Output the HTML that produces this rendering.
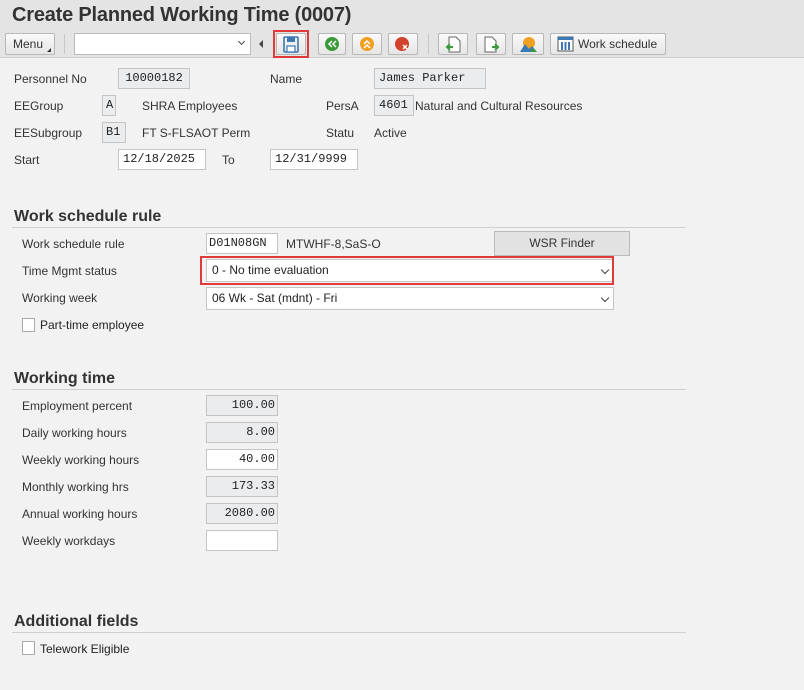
<!DOCTYPE html>
<html><head><meta charset="utf-8"><style>
*{box-sizing:border-box;margin:0;padding:0}
body{width:804px;height:690px;background:#f2f2f2;font-family:"Liberation Sans",sans-serif;font-size:12px;color:#333;position:relative;overflow:hidden}
.a{position:absolute}
.hdr{left:0;top:0;width:804px;height:58px;background:#e4e4e4;border-bottom:1px solid #d0d0d0}
.t{left:12px;top:4px;font-size:20px;font-weight:bold;color:#333;letter-spacing:-0.2px}
.btn{position:absolute;top:33px;height:22px;border:1px solid #b8b8b8;background:linear-gradient(#fafafa,#e6e6e6);border-radius:2px}
.lbl{position:absolute;font-size:12px;color:#333;line-height:14px}
.box{position:absolute;height:21px;border:1px solid #c4c4c4;background:#eaecee;font-family:"Liberation Mono",monospace;font-size:12px;line-height:19px;padding:0 4px;color:#222}
.w{background:#fff}
.r{text-align:right}
.sec{position:absolute;left:14px;font-size:16px;font-weight:bold;color:#333}
.line{position:absolute;left:12px;width:674px;height:1px;background:#cfcfcf}
.sel{position:absolute;left:206px;width:408px;height:23px;border:1px solid #c4c4c4;background:#fff;font-size:12px;line-height:21px;padding-left:5px;color:#222}
.chev{position:absolute;right:5px;top:7px;width:6px;height:6px;border-right:1.5px solid #444;border-bottom:1.5px solid #444;transform:rotate(45deg)}
.cb{position:absolute;width:13px;height:14px;border:1px solid #aaa;background:#fff}
</style></head><body>
<div class="a hdr"></div>
<div class="a t">Create Planned Working Time (0007)</div>
<div class="btn" style="left:5px;width:50px;font-size:12px;line-height:20px;padding-left:7px">Menu<span style="position:absolute;right:3px;bottom:2px;width:0;height:0;border-left:4px solid transparent;border-bottom:4px solid #333"></span></div>
<div class="a" style="left:64px;top:34px;width:1px;height:20px;background:#c8c8c8"></div>
<div class="a" style="left:74px;top:33px;width:177px;height:22px;background:#fff;border:1px solid #bbb"><div class="chev" style="top:5px;right:6px;width:5px;height:5px"></div></div>
<div class="a" style="left:259px;top:40px;width:0;height:0;border-top:4px solid transparent;border-bottom:4px solid transparent;border-right:4px solid #444"></div>
<div class="btn" style="left:276px;width:30px"><svg width="28" height="20" style="position:absolute;left:0;top:0"><rect x="7" y="3" width="14" height="15" rx="1" fill="none" stroke="#3c78b4" stroke-width="1.6"/><rect x="10" y="3" width="8" height="5" fill="#3c78b4"/><rect x="10" y="12" width="8" height="6" fill="#fff" stroke="#3c78b4" stroke-width="1.2"/></svg></div>
<div class="a" style="left:273px;top:30px;width:36px;height:28px;border:2px solid #e03a3a"></div>
<div class="btn" style="left:318px;width:28px"><svg width="26" height="20"><circle cx="13" cy="10" r="7" fill="#3a9a3a"/><path d="M13 7l-3 3 3 3M17 7l-3 3 3 3" stroke="#fff" stroke-width="1.5" fill="none"/></svg></div>
<div class="btn" style="left:352px;width:30px"><svg width="28" height="20"><circle cx="14" cy="10" r="7" fill="#f0a020"/><path d="M11 10l3-3 3 3M11 14l3-3 3 3" stroke="#fff" stroke-width="1.5" fill="none"/></svg></div>
<div class="btn" style="left:388px;width:30px"><svg width="28" height="20"><circle cx="13" cy="10" r="7" fill="#d0422c"/><path d="M14 11l4 4M18 11l-4 4" stroke="#fff" stroke-width="1.5"/></svg></div>
<div class="a" style="left:428px;top:34px;width:1px;height:20px;background:#c8c8c8"></div>
<div class="btn" style="left:438px;width:30px"><svg width="28" height="20"><path d="M10 3h7l4 4v11H10z" fill="#fff" stroke="#666"/><path d="M14 13h-5M11 10l-3 3 3 3" stroke="#3a9a3a" stroke-width="2" fill="none"/></svg></div>
<div class="btn" style="left:476px;width:30px"><svg width="28" height="20"><path d="M8 3h7l4 4v11H8z" fill="#fff" stroke="#666"/><path d="M15 13h6M18 10l3 3-3 3" stroke="#3a9a3a" stroke-width="2" fill="none"/></svg></div>
<div class="btn" style="left:512px;width:32px"><svg width="30" height="20"><circle cx="16" cy="9" r="6" fill="#f0a020"/><path d="M7 18l5-8 4 5 3-3 5 6z" fill="#3a7ab4"/><path d="M17 18l3-4 4 4z" fill="#3a9a3a"/></svg></div>
<div class="btn" style="left:550px;width:116px;font-size:12px;line-height:20px;padding-left:27px;color:#333"><svg width="18" height="16" style="position:absolute;left:6px;top:2px"><rect x="1" y="1" width="15" height="14" fill="#fff" stroke="#555"/><rect x="1" y="1" width="15" height="3" fill="#3c78b4"/><path d="M5 6v8M8.5 6v8M12 6v8" stroke="#3c78b4" stroke-width="2"/></svg>Work schedule</div>

<div class="lbl" style="left:14px;top:72px">Personnel No</div>
<div class="box" style="left:118px;top:68px;width:72px;text-align:center">10000182</div>
<div class="lbl" style="left:270px;top:72px">Name</div>
<div class="box" style="left:374px;top:68px;width:112px">James Parker</div>
<div class="lbl" style="left:14px;top:99px">EEGroup</div>
<div class="box" style="left:102px;top:95px;width:14px;padding:0 3px">A</div>
<div class="lbl" style="left:142px;top:99px">SHRA Employees</div>
<div class="lbl" style="left:326px;top:99px">PersA</div>
<div class="box" style="left:374px;top:95px;width:40px">4601</div>
<div class="lbl" style="left:415px;top:99px">Natural and Cultural Resources</div>
<div class="lbl" style="left:14px;top:126px">EESubgroup</div>
<div class="box" style="left:102px;top:122px;width:24px;padding:0 3px">B1</div>
<div class="lbl" style="left:142px;top:126px">FT S-FLSAOT Perm</div>
<div class="lbl" style="left:326px;top:126px">Statu</div>
<div class="lbl" style="left:374px;top:126px">Active</div>
<div class="lbl" style="left:14px;top:153px">Start</div>
<div class="box w" style="left:118px;top:149px;width:88px">12/18/2025</div>
<div class="lbl" style="left:222px;top:153px">To</div>
<div class="box w" style="left:270px;top:149px;width:88px">12/31/9999</div>

<div class="sec" style="top:208px">Work schedule rule</div>
<div class="line" style="top:227px"></div>
<div class="lbl" style="left:22px;top:237px">Work schedule rule</div>
<div class="box w" style="left:206px;top:233px;width:72px;padding:0 2px">D01N08GN</div>
<div class="lbl" style="left:286px;top:237px">MTWHF-8,SaS-O</div>
<div class="a" style="left:494px;top:231px;width:136px;height:25px;border:1px solid #bbb;background:#e2e2e2;text-align:center;line-height:23px">WSR Finder</div>
<div class="lbl" style="left:22px;top:264px">Time Mgmt status</div>
<div class="sel" style="top:259px">0 - No time evaluation<div class="chev"></div></div>
<div class="a" style="left:200px;top:256px;width:414px;height:29px;border:2px solid #e03a3a"></div>
<div class="lbl" style="left:22px;top:291px">Working week</div>
<div class="sel" style="top:287px">06 Wk - Sat (mdnt) - Fri<div class="chev"></div></div>
<div class="cb" style="left:22px;top:318px"></div>
<div class="lbl" style="left:40px;top:318px;color:#222">Part-time employee</div>

<div class="sec" style="top:370px">Working time</div>
<div class="line" style="top:389px"></div>
<div class="lbl" style="left:22px;top:399px">Employment percent</div>
<div class="box r" style="left:206px;top:395px;width:72px;padding-right:2px">100.00</div>
<div class="lbl" style="left:22px;top:426px">Daily working hours</div>
<div class="box r" style="left:206px;top:422px;width:72px;padding-right:2px">8.00</div>
<div class="lbl" style="left:22px;top:453px">Weekly working hours</div>
<div class="box r w" style="left:206px;top:449px;width:72px;padding-right:2px">40.00</div>
<div class="lbl" style="left:22px;top:480px">Monthly working hrs</div>
<div class="box r" style="left:206px;top:476px;width:72px;padding-right:2px">173.33</div>
<div class="lbl" style="left:22px;top:507px">Annual working hours</div>
<div class="box r" style="left:206px;top:503px;width:72px;padding-right:2px">2080.00</div>
<div class="lbl" style="left:22px;top:534px">Weekly workdays</div>
<div class="box w" style="left:206px;top:530px;width:72px"></div>

<div class="sec" style="top:613px">Additional fields</div>
<div class="line" style="top:632px"></div>
<div class="cb" style="left:22px;top:641px"></div>
<div class="lbl" style="left:40px;top:642px;color:#222">Telework Eligible</div>
</body></html>
